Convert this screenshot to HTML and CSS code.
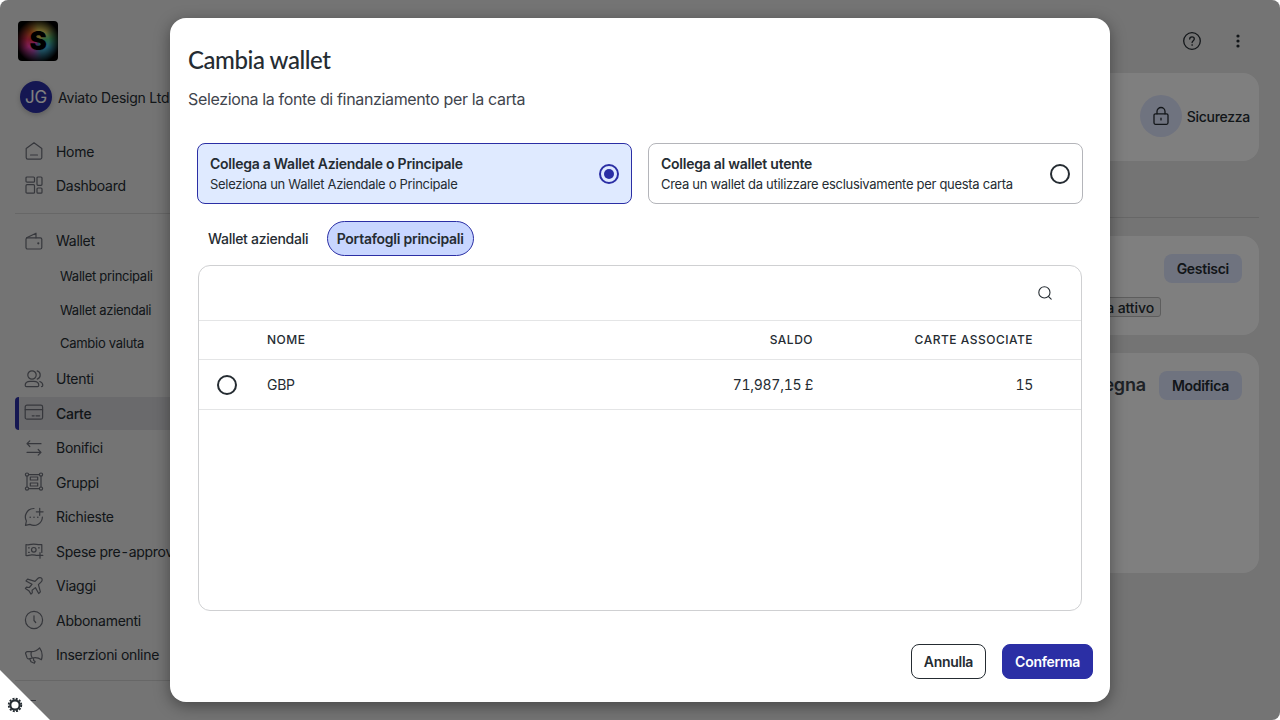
FILE: index.html
```html
<!DOCTYPE html>
<html lang="it">
<head>
    <meta charset="UTF-8">
    <meta name="viewport" content="width=device-width, initial-scale=1.0">
    <title>Cambia wallet</title>
    <link rel="stylesheet" href="styles.css">
</head>
<body>
    <div class="app">
        <nav class="sidebar">
            <div class="logo"><span>S</span></div>
            <div class="account">
                <span class="avatar">JG</span>
                <span class="account-name">Aviato Design Ltd</span>
            </div>

            <a class="nav-item top">
                <svg viewBox="0 0 20 20"><path d="M2.200 7.600 10 1.800l7.800 5.800V16.500a1.600 1.600 0 0 1-1.600 1.600H3.800a1.600 1.600 0 0 1-1.600-1.600zM6.500 14h7"/></svg>
                Home
            </a>
            <a class="nav-item top">
                <svg viewBox="0 0 20 20"><rect x="2" y="2" width="8.500" height="5.200" rx="1"/><rect x="13" y="2" width="5" height="8.300" rx="1"/><rect x="2" y="9.700" width="8.500" height="8.500" rx="1"/><rect x="13" y="13" width="5" height="5.200" rx="1"/></svg>
                Dashboard
            </a>
            <hr class="nav-line">
            <a class="nav-item">
                <svg viewBox="0 0 20 20"><rect x="2" y="6.800" width="15.800" height="11.200" rx="1.500"/><path d="M2.600 6.800 12 2.200v4.600"/><circle cx="14.300" cy="12.300" r=".5"/></svg>
                Wallet
            </a>
            <div class="subnav">
                <a>Wallet principali</a>
                <a>Wallet aziendali</a>
                <a>Cambio valuta</a>
            </div>
            <a class="nav-item">
                <svg viewBox="0 0 20 20"><circle cx="8" cy="6" r="4.200"/><path d="M1.200 16.300c0-2.500 2.300-4 5-4h3.600c2.700 0 5 1.500 5 4 0 .8-.5 1.300-1.300 1.300h-11c-.8 0-1.300-.5-1.300-1.300zM13.200 1.900a4.300 4.300 0 0 1 0 8.200M15.800 12.500c1.700.6 3 1.900 3 3.800 0 .8-.5 1.300-1.300 1.300"/></svg>
                Utenti
            </a>
            <a class="nav-item active">
                <svg viewBox="0 0 20 20"><rect x="1.200" y="2.200" width="17.400" height="14" rx="1.800"/><path d="M1.200 6.700h17.400M8.200 12.800h2M12 12.800h3.600"/></svg>
                Carte
            </a>
            <a class="nav-item">
                <svg viewBox="0 0 20 20"><path d="M17 5.700H3M5.800 2.900 3 5.700l2.800 2.800M3 14.300h14M14.200 11.500l2.800 2.800-2.800 2.800"/></svg>
                Bonifici
            </a>
            <a class="nav-item">
                <svg viewBox="0 0 20 20"><circle cx="3" cy="2.600" r="1.600"/><circle cx="17" cy="2.600" r="1.600"/><circle cx="3" cy="16.600" r="1.600"/><circle cx="17" cy="16.600" r="1.600"/><path d="M4.600 2.600h10.800M4.600 16.600h10.800M3 4.200v10.800M17 4.200v10.800"/><rect x="6.300" y="5" width="7.400" height="3"/><rect x="6.300" y="11" width="7.400" height="3"/></svg>
                Gruppi
            </a>
            <a class="nav-item">
                <svg viewBox="0 0 20 20"><path d="M10 1.500A8.500 8.500 0 0 0 2.400 14L1.500 18.400l4.400-1A8.500 8.500 0 0 0 18.400 10M15.700 1.300v7M12.300 4.800h6.800"/><path class="dots" d="M6.200 10.200h.01M10 10.200h.01M13.800 10.200h.01"/></svg>
                Richieste
            </a>
            <a class="nav-item">
                <svg viewBox="0 0 20 20"><path d="M12.500 14.400c-1.800-.3-3.200-.8-5-.5-2.200.4-3.600 1-5.500.5V3.500c2 .7 3.700.2 5.500-.2 3.500-.8 6 .8 10.300.2v8"/><circle cx="9.800" cy="8.800" r="2.300"/><path d="M4.500 6.800h.8M14.500 6.800h.8M4.500 11.300h.8M16 11.600v5.600M13.200 14.400h5.600"/></svg>
                <span>Spese pre<span class="dash">-</span>approvate</span>
            </a>
            <a class="nav-item">
                <svg viewBox="0 0 20 20"><path d="M17.500 2.200c-1-1-2.600-.8-3.700.3L11 5.300 3.600 3.200 2 4.900l6 3.400-2.700 3.200-2.800-.3L1.400 12.400l3.400 2.300 2.200 3.400 1.300-1.200-.2-2.700 3.300-2.600 3.300 5.900 1.700-1.600L14.400 8.600l2.800-2.800c1.100-1.100 1.300-2.600.3-3.600z"/></svg>
                Viaggi
            </a>
            <a class="nav-item">
                <svg viewBox="0 0 20 20"><circle cx="10" cy="10" r="8.600"/><path d="M10 5.800v4.700l1.700 2"/></svg>
                Abbonamenti
            </a>
            <a class="nav-item">
                <svg viewBox="0 0 20 20"><path d="M3.400 6.700h4c3.200 0 6.200-1.600 8.200-3.900 2.500 3.300 3.100 7.800 1.800 11.900-2.600-1.800-5.800-2.600-9-1.700l-3.500.9c-.8.200-1.500-.2-1.800-1L1.700 8.800c-.4-1.200.5-2.100 1.700-2.100zM7.500 6.700c-.8 2-.4 4.500.8 6.300M5.800 13.900l1.200 2.800 3.400 1.500.7-1.700-1.400-1-.3-2.500"/></svg>
                Inserzioni online
            </a>
            <hr class="nav-line last">
            <a class="nav-item">
                <svg viewBox="0 0 20 20"><path d="M3 2.500h8.500"/></svg>
            </a>
        </nav>

        <main class="content">
            <header class="topbar">
                <svg class="help" viewBox="0 0 20 20"><circle cx="10" cy="10" r="8.300"/><path d="M7.700 8.100c0-1.400 1-2.200 2.300-2.200s2.300.9 2.300 2.100c0 1.600-2.200 1.700-2.200 3.500M10.100 13.700v.6"/></svg>
                <svg class="more" viewBox="0 0 20 20"><circle cx="10" cy="5" r="1.600"/><circle cx="10" cy="10" r="1.600"/><circle cx="10" cy="15" r="1.600"/></svg>
            </header>
            <section class="card card-actions">
                <span class="round-icon">
                    <svg viewBox="0 0 20 20"><rect x="3" y="7.800" width="14" height="10.500" rx="1.500"/><path d="M6 7.800V5.500a4 4 0 0 1 8 0v2.300M10 12.200v1.700"/></svg>
                </span>
                Sicurezza
            </section>
            <hr class="content-line">
            <section class="card card-program">
                <button class="soft-btn">Gestisci</button>
                <span class="chip">Programma attivo</span>
            </section>
            <section class="card card-delivery">
                <h2>Consegna</h2>
                <button class="soft-btn">Modifica</button>
            </section>
        </main>

        <div class="overlay">
            <div class="modal">
                <h1>Cambia wallet</h1>
                <p class="subtitle">Seleziona la fonte di finanziamento per la carta</p>

                <div class="options">
                    <label class="option selected">
                        <span class="option-text">
                            <strong>Collega a Wallet Aziendale o Principale</strong>
                            <small>Seleziona un Wallet Aziendale o Principale</small>
                        </span>
                        <span class="radio checked"></span>
                    </label>
                    <label class="option">
                        <span class="option-text">
                            <strong>Collega al wallet utente</strong>
                            <small>Crea un wallet da utilizzare esclusivamente per questa carta</small>
                        </span>
                        <span class="radio"></span>
                    </label>
                </div>

                <div class="tabs">
                    <button class="tab">Wallet aziendali</button>
                    <button class="tab current">Portafogli principali</button>
                </div>

                <div class="table">
                    <div class="search">
                        <svg viewBox="0 0 16 16"><circle cx="7.400" cy="7.400" r="5.600"/><path d="m11.600 11.600 2.600 2.600"/></svg>
                    </div>
                    <div class="row head">
                        <span></span>
                        <span>NOME</span>
                        <span class="num">SALDO</span>
                        <span class="num">CARTE ASSOCIATE</span>
                    </div>
                    <div class="row">
                        <span class="radio"></span>
                        <span>GBP</span>
                        <span class="num">71,987,15 £</span>
                        <span class="num">15</span>
                    </div>
                </div>

                <div class="actions">
                    <button class="btn">Annulla</button>
                    <button class="btn primary">Conferma</button>
                </div>
            </div>
        </div>
    </div>

    <div class="corner">
        <svg viewBox="0 0 16 16"><circle class="teeth" cx="8" cy="8" r="6.300"/><circle class="ring" cx="8" cy="8" r="4.700"/></svg>
    </div>
</body>
</html>
```
FILE: styles.css
```css
* {
    box-sizing: border-box;
}
body {
    margin: 0;
    background: #fff;
    color: #252c32;
    font-family: Inter, "Liberation Sans", sans-serif;
    font-size: 14px;
    letter-spacing: -0.28px;
    overflow: hidden;
}
button {
    font-family: inherit;
    font-size: 14px;
    letter-spacing: inherit;
    color: inherit;
    border: none;
    background: none;
    padding: 0;
}
svg {
    fill: none;
    stroke: currentColor;
    stroke-linecap: round;
    stroke-linejoin: round;
    flex: none;
}
hr {
    border: none;
    margin: 0;
    height: 1px;
    background: #cfcfcf;
}
.app {
    position: relative;
    display: flex;
    width: 1280px;
    height: 720px;
    background: #e8e8e8;
    border-radius: 8px;
    overflow: hidden;
}

/* sidebar */
.sidebar {
    width: 215px;
    padding: 21px 0 0 15px;
    flex: none;
}
.logo {
    display: flex;
    align-items: center;
    justify-content: center;
    width: 40px;
    height: 40px;
    margin-left: 3px;
    border-radius: 4px;
    background:
        radial-gradient(circle, transparent 38%, #000 78%),
        conic-gradient(from 0deg, #d8c050, #e0d060 40deg, #50c880 80deg, #40b8e0 120deg, #3a90b0 165deg, #a050b0 200deg, #ff40b0 240deg, #e83050 280deg, #d86020 320deg, #d8c050);
    color: #000;
    font-size: 26px;
    font-weight: 900;
    line-height: 40px;
}
.account {
    display: flex;
    align-items: center;
    gap: 6px;
    height: 32px;
    margin: 20px 0 21.4px 5px;
    white-space: nowrap;
}
.avatar {
    width: 32px;
    height: 32px;
    border-radius: 50%;
    background: #2b2fa5;
    box-shadow: 0 2px 5px rgba(0,0,0,0.2);
    color: #fff;
    font-size: 17px;
    line-height: 32px;
    text-align: center;
}
.account-name {
    padding-top: 1px;
    letter-spacing: -0.22px;
}
.nav-item {
    display: flex;
    align-items: center;
    gap: 12px;
    height: 34.5px;
    padding-left: 9px;
    white-space: nowrap;
}
.nav-item.top {
    height: 34px;
}
.nav-item svg {
    width: 20px;
    height: 20px;
    color: #6c6f78;
    stroke-width: 1.2;
}
.nav-item .dots {
    stroke-width: 1.6;
}
.nav-item .dash {
    margin: 0 1px;
}
.nav-item.active {
    height: 33px;
    margin: 0.75px 0;
    padding-left: 5px;
    border-left: 4px solid #2b2fa5;
    border-radius: 4px 0 0 4px;
    background: #d4d4d9;
    font-weight: 500;
}
.nav-line {
    margin: 10.6px 0 9.5px;
}
.nav-line.last {
    margin-top: 8px;
}
.subnav {
    display: flex;
    flex-direction: column;
    margin: 2.2px 0 0.8px 45px;
}
.subnav a {
    height: 33.5px;
    font-size: 13px;
    line-height: 33.5px;
}
.subnav a:nth-child(2) {
    padding-top: 0.5px;
}

/* page behind the dialog */
.content {
    flex: 1;
    padding: 0 21px 0 0;
}
.topbar {
    display: flex;
    justify-content: flex-end;
    align-items: center;
    gap: 26px;
    height: 73px;
    padding: 9px 11px 0 0;
}
.topbar svg {
    width: 20px;
    height: 20px;
    stroke-width: 1.3;
}
.topbar .more {
    fill: currentColor;
    stroke: none;
}
.card {
    background: #fff;
    border-radius: 16px;
}
.card-actions {
    display: flex;
    align-items: center;
    justify-content: flex-end;
    gap: 5px;
    height: 88px;
    padding: 0 9px 2px 0;
    font-weight: 500;
}
.round-icon {
    display: flex;
    align-items: center;
    justify-content: center;
    width: 42px;
    height: 42px;
    border-radius: 50%;
    background: #dfe6ff;
}
.round-icon svg {
    width: 20px;
    height: 20px;
    stroke-width: 1.3;
}
.content-line {
    margin: 56px 0 18px;
}
.card-program {
    display: flex;
    flex-direction: column;
    align-items: flex-end;
    height: 99px;
    margin-bottom: 18px;
    padding: 18px 17px;
}
.soft-btn {
    height: 29px;
    padding: 0 13px;
    border-radius: 8px;
    background: #dfe6ff;
    font-weight: 600;
}
.chip {
    height: 20px;
    margin: 14px 81px 0 0;
    padding: 0 6px;
    border: 1px solid #bbb;
    border-radius: 3px;
    background: #eee;
    font-weight: 500;
    letter-spacing: -0.1px;
    line-height: 20px;
}
.card-delivery {
    display: flex;
    justify-content: flex-end;
    gap: 13px;
    height: 220px;
    padding: 18px 17px;
}
.card-delivery h2 {
    margin: 0;
    font-size: 18px;
    font-weight: 600;
    letter-spacing: -0.2px;
    line-height: 28px;
    color: #3f454d;
}

/* dialog */
.overlay {
    position: absolute;
    inset: 0;
    display: flex;
    align-items: center;
    justify-content: center;
    background: rgba(0,0,0,0.5);
}
.modal {
    display: flex;
    flex-direction: column;
    width: 940px;
    height: 684px;
    padding: 26px 17px 23px 18px;
    background: #fff;
    border-radius: 16px;
    box-shadow: 0 4px 16px rgba(0,0,0,0.4);
}
.modal h1 {
    margin: 0;
    font-family: Lato, sans-serif;
    font-size: 24px;
    font-weight: 500;
    letter-spacing: -0.45px;
    line-height: 32px;
}
.subtitle {
    margin: 12px 0 0;
    color: #3f454d;
    font-size: 16px;
    letter-spacing: -0.35px;
    line-height: 22px;
}
.options {
    display: flex;
    gap: 16px;
    margin: 33px 10px 0 9px;
}
.option {
    display: flex;
    flex: 1;
    align-items: center;
    justify-content: space-between;
    height: 61px;
    padding: 0 12px;
    border: 1px solid #b4b5ba;
    border-radius: 8px;
}
.option.selected {
    border-color: #2b2fa5;
    background: #dfeaff;
}
.option-text {
    display: flex;
    flex-direction: column;
}
.option strong {
    font-weight: 600;
    letter-spacing: -0.25px;
    line-height: 20px;
}
.option small {
    font-size: 13px;
    letter-spacing: -0.3px;
    line-height: 20px;
}
.radio {
    display: flex;
    width: 20px;
    height: 20px;
    border: 2px solid #252c32;
    border-radius: 50%;
}
.radio.checked {
    border-color: #2b2fa5;
}
.radio.checked::after {
    content: "";
    width: 10px;
    height: 10px;
    margin: 3px;
    border-radius: 50%;
    background: #2b2fa5;
}
.tabs {
    display: flex;
    gap: 8.5px;
    margin: 17px 0 9px 10px;
}
.tab {
    height: 35px;
    padding: 0 10px;
    font-weight: 500;
}
.tab.current {
    padding: 0 9px;
    border: 1px solid #2b2fa5;
    border-radius: 18px;
    background: #c8d6ff;
    font-weight: 600;
    letter-spacing: -0.25px;
}
.table {
    height: 346px;
    margin: 0 11px 0 10px;
    border: 1px solid #cfd0d2;
    border-radius: 12px;
}
.search {
    display: flex;
    align-items: center;
    justify-content: flex-end;
    height: 54px;
    padding-right: 28px;
}
.search svg {
    width: 16px;
    height: 16px;
    stroke-width: 1.1;
}
.row {
    display: grid;
    grid-template-columns: 50px 1fr 200px 220px;
    align-items: center;
    height: 50px;
    padding: 0 48px 0 18px;
    border-bottom: 1px solid #e4e5e6;
    letter-spacing: -0.28px;
}
.row.head {
    height: 40px;
    padding-bottom: 1px;
    border-top: 1px solid #e4e5e6;
    font-size: 12px;
    font-weight: 500;
    letter-spacing: 0.5px;
}
.num {
    font-variant-numeric: tabular-nums;
    text-align: right;
}
.actions {
    display: flex;
    justify-content: flex-end;
    gap: 16px;
    margin-top: auto;
}
.btn {
    height: 35px;
    padding: 0 12px;
    border: 1px solid #252c32;
    border-radius: 8px;
    font-weight: 600;
}
.btn.primary {
    border-color: #2b2fa5;
    background: #2b2fa5;
    color: #fff;
}

/* settings corner */
.corner {
    position: absolute;
    left: 0;
    top: 670px;
    display: flex;
    align-items: flex-end;
    width: 50px;
    height: 50px;
    padding: 0 0 7px 7px;
    background: #fff;
    clip-path: polygon(0 0, 100% 100%, 0 100%);
}
.corner svg {
    width: 16px;
    height: 16px;
}
.corner .ring {
    stroke-width: 2.2;
}
.corner .teeth {
    stroke-width: 1.8;
    stroke-linecap: butt;
    stroke-dasharray: 2 1.299;
}
```
